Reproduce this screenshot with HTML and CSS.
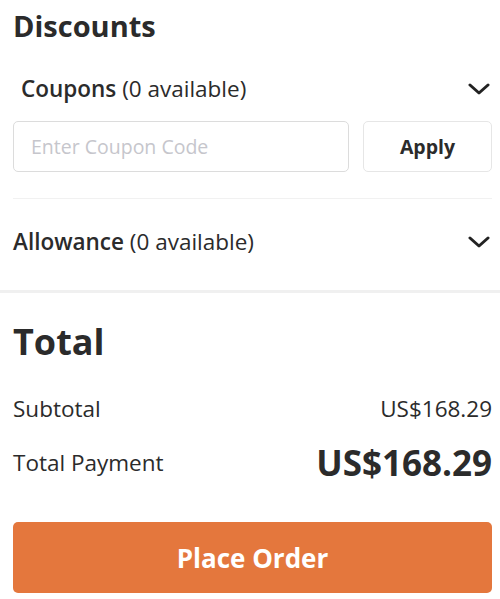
FILE: index.html
```html
<!DOCTYPE html>
<html lang="en">
<head>
<meta charset="utf-8">
<title>Checkout</title>
<link rel="stylesheet" href="styles.css">
</head>
<body>
  <section class="discounts">
    <h2 class="title">Discounts</h2>
    <div class="row coupons">
      <span class="label"><strong>Coupons</strong> (0 available)</span>
      <svg class="chev" viewBox="0 0 22 12" width="22" height="12"><path d="M2 2 L11 10 L20 2" fill="none" stroke="#222" stroke-width="3" stroke-linecap="round" stroke-linejoin="round"/></svg>
    </div>
    <div class="coupon-form">
      <input class="coupon-input" type="text" placeholder="Enter Coupon Code">
      <button class="apply">Apply</button>
    </div>
    <div class="divider"></div>
    <div class="row allowance">
      <span class="label"><strong>Allowance</strong> (0 available)</span>
      <svg class="chev" viewBox="0 0 22 12" width="22" height="12"><path d="M2 2 L11 10 L20 2" fill="none" stroke="#222" stroke-width="3" stroke-linecap="round" stroke-linejoin="round"/></svg>
    </div>
  </section>
  <div class="band"></div>
  <section class="total">
    <h2 class="total-title">Total</h2>
    <div class="sum-row subtotal">
      <span>Subtotal</span>
      <span>US$168.29</span>
    </div>
    <div class="sum-row payment">
      <span>Total Payment</span>
      <span class="amount">US$168.29</span>
    </div>
    <div class="order-wrap">
      <button class="place-order">Place Order</button>
      <span class="tip-arrow"></span>
    </div>
  </section>
</body>
</html>
```
FILE: styles.css
```css
* { box-sizing: border-box; }
html, body { margin: 0; padding: 0; background: #fff; }
body {
  font-family: "Open Sans", "Noto Sans", sans-serif;
  color: #2b2b2b;
  overflow: hidden;
}
.discounts { padding: 7px 8px 33px 13px; }
.title {
  margin: 0;
  font-size: 29px;
  line-height: 38px;
  font-weight: 700;
}
.row {
  display: flex;
  align-items: center;
  justify-content: space-between;
  font-size: 22.5px;
  line-height: 30px;
}
.row strong { font-weight: 600; }
.coupons { margin-top: 29px; padding-left: 8px; }
.chev { display: block; margin-right: 2px; }
.coupon-form {
  display: flex;
  gap: 14px;
  margin-top: 17px;
  height: 51px;
}
.coupon-input {
  flex: 1;
  min-width: 0;
  height: 51px;
  border: 1px solid #dcdcdc;
  border-radius: 5px;
  padding: 0 0 0 17px;
  font-family: inherit;
  font-size: 19.5px;
  color: #333;
  outline: none;
}
.coupon-input::placeholder { color: #c6c6cc; }
.apply {
  width: 129px;
  height: 51px;
  border: 1px solid #e6e6e6;
  border-radius: 5px;
  background: #fff;
  font-family: inherit;
  font-size: 19.5px;
  font-weight: 700;
  color: #2b2b2b;
  padding: 0;
}
.divider {
  margin-top: 26px;
  height: 1px;
  background: #f1f1f1;
}
.allowance { margin-top: 28px; }
.band { height: 3px; background: #f0f0f0; }
.total { padding: 27px 8px 0 13px; }
.total-title {
  margin: 0;
  font-size: 36px;
  line-height: 44px;
  font-weight: 700;
}
.sum-row {
  display: flex;
  align-items: center;
  justify-content: space-between;
  font-size: 22.5px;
}
.subtotal { margin-top: 30px; line-height: 30px; }
.payment { margin-top: 16px; line-height: 46px; }
.amount { font-size: 35px; font-weight: 700; }
.order-wrap { position: relative; margin-top: 36px; }
.place-order {
  display: block;
  width: 100%;
  height: 71px;
  border: none;
  border-radius: 5px;
  background: #e4773d;
  color: #fff;
  font-family: inherit;
  font-size: 26px;
  font-weight: 700;
  padding: 0;
}
.tip-arrow {
  position: absolute;
  left: 50%;
  top: 72px;
  margin-left: -9px;
  width: 0;
  height: 0;
  border-left: 5px solid transparent;
  border-right: 5px solid transparent;
  border-bottom: 6px solid #f0d59a;
}
```
